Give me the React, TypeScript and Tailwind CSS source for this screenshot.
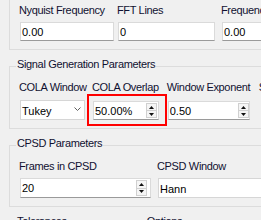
import React from "react";

const labelCls = "block h-[13px] leading-[13px] whitespace-nowrap text-[#101030] -ml-px tracking-[-0.35px]";

function Spinner({ right, top, h }: { right: number; top: number; h: number }) {
  const half = Math.floor(h / 2) + 1;
  return (
    <div
      className="absolute flex w-[11px] flex-col"
      style={{ right, top, height: h }}
    >
      <div
        className="flex items-center justify-center border border-[#d0d0d0] bg-[#f5f5f5]"
        style={{ height: half }}
      >
        <svg width="5" height="3" viewBox="0 0 5 3">
          <path d="M0 3 L2.5 0 L5 3Z" fill="#111" />
        </svg>
      </div>
      <div
        className="-mt-px flex items-center justify-center border border-[#d0d0d0] bg-[#f5f5f5]"
        style={{ height: half }}
      >
        <svg width="5" height="3" viewBox="0 0 5 3">
          <path d="M0 0 L5 0 L2.5 3Z" fill="#111" />
        </svg>
      </div>
    </div>
  );
}

function TextInput({
  value,
  h = 19,
  spin,
}: {
  value: string;
  h?: number;
  spin?: { right: number; top: number; h: number };
}) {
  return (
    <div
      className="relative w-full border border-[#dadada] border-b-[#9a9a9a] bg-white pl-[1px] pt-[2px] leading-[15px] text-black whitespace-nowrap overflow-hidden"
      style={{ height: h }}
    >
      {value}
      {spin && <Spinner right={spin.right} top={spin.top} h={spin.h} />}
    </div>
  );
}

function Combo({ value, chevron = true }: { value: string; chevron?: boolean }) {
  return (
    <div className="relative h-[20px] w-full border border-[#d6d6d6] bg-white pl-[1px] pt-[2px] leading-[16px] text-black whitespace-nowrap">
      {value}
      {chevron && (
        <svg
          className="absolute right-[3px] top-[6px]"
          width="7"
          height="5"
          viewBox="0 0 7 5"
        >
          <path d="M0.5 0.5 L3.5 3.5 L6.5 0.5" stroke="#606060" strokeWidth="1" fill="none" />
        </svg>
      )}
    </div>
  );
}

function GroupTitle({ children }: { children: React.ReactNode }) {
  return (
    <span className="absolute left-[6px] top-[-9px] bg-[#f0f0f0] px-[1px] leading-[13px] whitespace-nowrap text-[#101030] tracking-[-0.35px]">
      {children}
    </span>
  );
}

export default function App() {
  return (
    <div className="relative h-[220px] w-[261px] overflow-hidden bg-[#f0f0f0] font-['Liberation_Sans',Arial,sans-serif] text-[11px]">
      <div className="flex flex-col pl-[9px]">
        {/* Group 1 */}
        <div className="relative -mt-[10px] h-[60px] w-[320px] border border-[#dcdcdc] pl-[10px] pt-[13px]">
          <div className="flex items-start">
            <div className="flex w-[94px] flex-col">
              <span className={labelCls}>Nyquist Frequency</span>
              <div className="mt-[5px]">
                <TextInput value="0.00" />
              </div>
            </div>
            <div className="ml-[4px] flex w-[97px] flex-col">
              <span className={labelCls}>FFT Lines</span>
              <div className="mt-[5px]">
                <TextInput value="0" />
              </div>
            </div>
            <div className="ml-[7px] flex w-[100px] flex-col">
              <span className={labelCls}>Frequency Resolution</span>
              <div className="mt-[5px]">
                <TextInput value="0.00" />
              </div>
            </div>
          </div>
        </div>

        {/* Group 2 */}
        <div className="relative mt-[16px] h-[63px] w-[320px] border border-[#dcdcdc] pl-[10px] pt-[14px]">
          <GroupTitle>Signal Generation Parameters</GroupTitle>
          <div className="flex items-start">
            <div className="flex w-[65px] flex-col">
              <span className={labelCls}>COLA Window</span>
              <div className="mt-[6px]">
                <Combo value="Tukey" />
              </div>
            </div>
            <div className="ml-[8px] flex w-[66px] flex-col">
              <span className={labelCls}>COLA Overlap</span>
              <div className="mt-[7px]">
                <TextInput value="50.00%" spin={{ right: 1, top: 1, h: 15 }} />
              </div>
            </div>
            <div className="ml-[9px] flex w-[82px] flex-col">
              <span className={labelCls}>Window Exponent</span>
              <div className="mt-[7px]">
                <TextInput value="0.50" spin={{ right: 0, top: 1, h: 15 }} />
              </div>
            </div>
            <div className="ml-[10px] flex w-[80px] flex-col">
              <span className={labelCls}>Seed</span>
            </div>
          </div>
        </div>

        {/* Group 3 */}
        <div className="relative mt-[16px] h-[62px] w-[320px] border border-[#dcdcdc] pl-[10px] pt-[14px]">
          <GroupTitle>CPSD Parameters</GroupTitle>
          <div className="flex items-start">
            <div className="flex w-[131px] flex-col">
              <span className={labelCls}>Frames in CPSD</span>
              <div className="mt-[5px]">
                <TextInput value="20" h={20} spin={{ right: 3, top: 1, h: 16 }} />
              </div>
            </div>
            <div className="ml-[7px] flex w-[130px] flex-col">
              <span className={labelCls}>CPSD Window</span>
              <div className="mt-[5px]">
                <Combo value="Hann" chevron={false} />
              </div>
            </div>
          </div>
        </div>

        {/* Group 4 row */}
        <div className="mt-[16px] flex">
          <div className="relative h-[60px] w-[143px] border border-[#dcdcdc]">
            <GroupTitle>Tolerances</GroupTitle>
          </div>
          <div className="relative ml-[5px] h-[60px] w-[140px] border border-[#dcdcdc]">
            <GroupTitle>Options</GroupTitle>
          </div>
        </div>
      </div>

      {/* annotation highlight */}
      <div className="pointer-events-none absolute left-[87px] top-[94px] h-[32px] w-[80px] border-2 border-[#ff0000]" />
    </div>
  );
}
